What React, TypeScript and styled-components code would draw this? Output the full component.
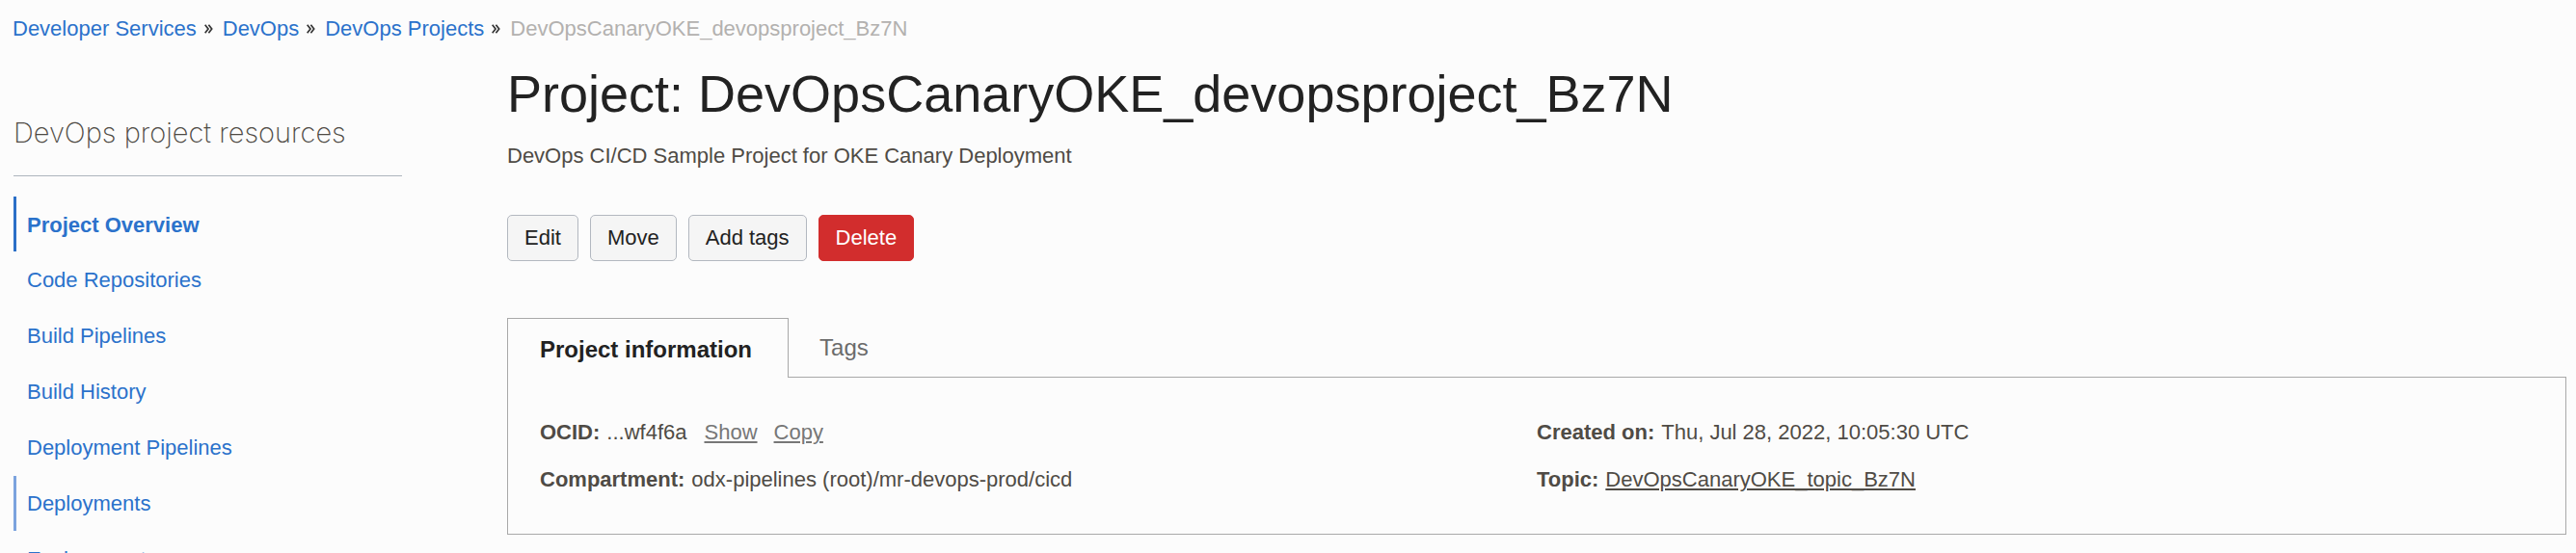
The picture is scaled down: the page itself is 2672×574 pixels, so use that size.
import React from "react";
import styled, { createGlobalStyle, css } from "styled-components";

const Global = createGlobalStyle`
  * { box-sizing: border-box; }
  body {
    margin: 0;
    background: #fcfcfc;
    color: #4f4b45;
    font: 22px/24px "Liberation Sans", Arial, Helvetica, sans-serif;
  }
`;

const Shell = styled.div`
  height: 100vh;
  overflow: hidden;
  padding: 18px 10px 0 13px;
`;

const Breadcrumbs = styled.ol`
  display: flex;
  align-items: center;
  gap: 10px;
  margin: 0;
  padding: 0;
  list-style: none;
  white-space: nowrap;
`;

const Crumb = styled.li`
  display: flex;
  align-items: center;
  gap: 8px;
  color: #b3b1af;
`;

const CrumbLink = styled.a`
  color: #2b72cb;
  text-decoration: none;
`;

const Columns = styled.div`
  display: grid;
  grid-template-columns: 403px minmax(0, 1fr);
  column-gap: 109px;
  padding-left: 1px;
`;

const Sidebar = styled.aside`
  padding-top: 78px;
`;

const SidebarTitle = styled.h2`
  margin: 0 0 21px;
  padding-bottom: 26px;
  border-bottom: 1px solid #adb5bd;
  font-family: Inter, "Liberation Sans", sans-serif;
  font-size: 29px;
  line-height: 36px;
  font-weight: 200;
  color: #4f4b45;
`;

const ResourceList = styled.ul`
  display: grid;
  row-gap: 1px;
  margin: 0;
  padding: 0;
  list-style: none;
`;

const ResourceLink = styled.a<{ $state?: "current" | "hover" }>`
  display: flex;
  align-items: center;
  height: 57px;
  padding-left: 11px;
  border-left: 3px solid transparent;
  color: #2b72cb;
  text-decoration: none;
  ${(p) => p.$state === "current" && css`padding-top: 2px; border-color: #2b6fc7; font-weight: 700;`}
  ${(p) => p.$state === "hover" && css`border-color: #7ba3de;`}
`;

const Main = styled.main`
  padding-top: 23px;
`;

const Title = styled.h1`
  margin: 0 0 21px;
  font-size: 54px;
  line-height: 64px;
  font-weight: 400;
  color: #222;
`;

const Description = styled.p`
  margin: 0 0 49px;
`;

const Actions = styled.div`
  display: flex;
  gap: 12px;
  margin-bottom: 59px;
`;

const ActionButton = styled.button<{ $danger?: boolean }>`
  height: 48px;
  padding: 0 17px;
  border: 1px solid ${(p) => (p.$danger ? "#d22d2d" : "#b3b8c0")};
  border-radius: 5px;
  background: ${(p) => (p.$danger ? "#d22d2d" : "#f5f5f5")};
  color: ${(p) => (p.$danger ? "#fff" : "#222")};
  font: inherit;
`;

const TabList = styled.div`
  display: flex;
  height: 61px;
`;

const Tab = styled.button<{ $selected?: boolean }>`
  padding: 0 31px;
  border: 1px solid transparent;
  border-bottom: 0;
  background: none;
  color: #6b6b6b;
  font: inherit;
  font-size: 24px;
  ${(p) =>
    p.$selected &&
    css`
      z-index: 1;
      margin-bottom: -1px;
      padding: 2px 37px 0 33px;
      border-color: #a9a9a9;
      background: #fcfcfc;
      color: #222;
      font-weight: 700;
    `}
`;

const Panel = styled.div`
  display: grid;
  grid-template-columns: 1fr 1fr;
  row-gap: 25px;
  padding: 45px 33px 44px;
  border: 1px solid #a9a9a9;
`;

const Field = styled.div`
  display: flex;
  gap: 7px;
  white-space: nowrap;
`;

const Label = styled.strong`
  font-weight: 700;
`;

const InlineLinks = styled.span`
  display: flex;
  gap: 17px;
  margin-left: 11px;
`;

const DetailLink = styled.a<{ $muted?: boolean }>`
  color: ${(p) => (p.$muted ? "#777" : "#4f4b45")};
  text-decoration: underline;
  text-decoration-thickness: 2px;
  text-underline-offset: 2px;
`;

const Chevrons = () => (
  <svg width="9" height="10" viewBox="0 0 9 10" fill="none" stroke="#333" strokeWidth="1.7" aria-hidden="true">
    <path d="M0.7 0.8 L4 5 L0.7 9.2 M4.4 0.8 L7.7 5 L4.4 9.2" />
  </svg>
);

const trail = ["Developer Services", "DevOps", "DevOps Projects"];

const resources: { name: string; state?: "current" | "hover" }[] = [
  { name: "Project Overview", state: "current" },
  { name: "Code Repositories" },
  { name: "Build Pipelines" },
  { name: "Build History" },
  { name: "Deployment Pipelines" },
  { name: "Deployments", state: "hover" },
  { name: "Environments" },
];

export default function App() {
  return (
    <Shell>
      <Global />
      <nav aria-label="Breadcrumb">
        <Breadcrumbs>
          {trail.map((name) => (
            <Crumb key={name}>
              <CrumbLink href="#">{name}</CrumbLink>
              <Chevrons />
            </Crumb>
          ))}
          <Crumb aria-current="page">DevOpsCanaryOKE_devopsproject_Bz7N</Crumb>
        </Breadcrumbs>
      </nav>
      <Columns>
        <Sidebar>
          <SidebarTitle>DevOps project resources</SidebarTitle>
          <ResourceList>
            {resources.map((r) => (
              <li key={r.name}>
                <ResourceLink href="#" $state={r.state}>{r.name}</ResourceLink>
              </li>
            ))}
          </ResourceList>
        </Sidebar>
        <Main>
          <Title>Project: DevOpsCanaryOKE_devopsproject_Bz7N</Title>
          <Description>DevOps CI/CD Sample Project for OKE Canary Deployment</Description>
          <Actions>
            <ActionButton>Edit</ActionButton>
            <ActionButton>Move</ActionButton>
            <ActionButton>Add tags</ActionButton>
            <ActionButton $danger>Delete</ActionButton>
          </Actions>
          <TabList role="tablist">
            <Tab role="tab" aria-selected="true" $selected>Project information</Tab>
            <Tab role="tab" aria-selected="false">Tags</Tab>
          </TabList>
          <Panel role="tabpanel">
            <Field>
              <Label>OCID:</Label>
              <span>...wf4f6a</span>
              <InlineLinks>
                <DetailLink href="#" $muted>Show</DetailLink>
                <DetailLink href="#" $muted>Copy</DetailLink>
              </InlineLinks>
            </Field>
            <Field>
              <Label>Created on:</Label>
              <span>Thu, Jul 28, 2022, 10:05:30 UTC</span>
            </Field>
            <Field>
              <Label>Compartment:</Label>
              <span>odx-pipelines (root)/mr-devops-prod/cicd</span>
            </Field>
            <Field>
              <Label>Topic:</Label>
              <DetailLink href="#">DevOpsCanaryOKE_topic_Bz7N</DetailLink>
            </Field>
          </Panel>
        </Main>
      </Columns>
    </Shell>
  );
}
